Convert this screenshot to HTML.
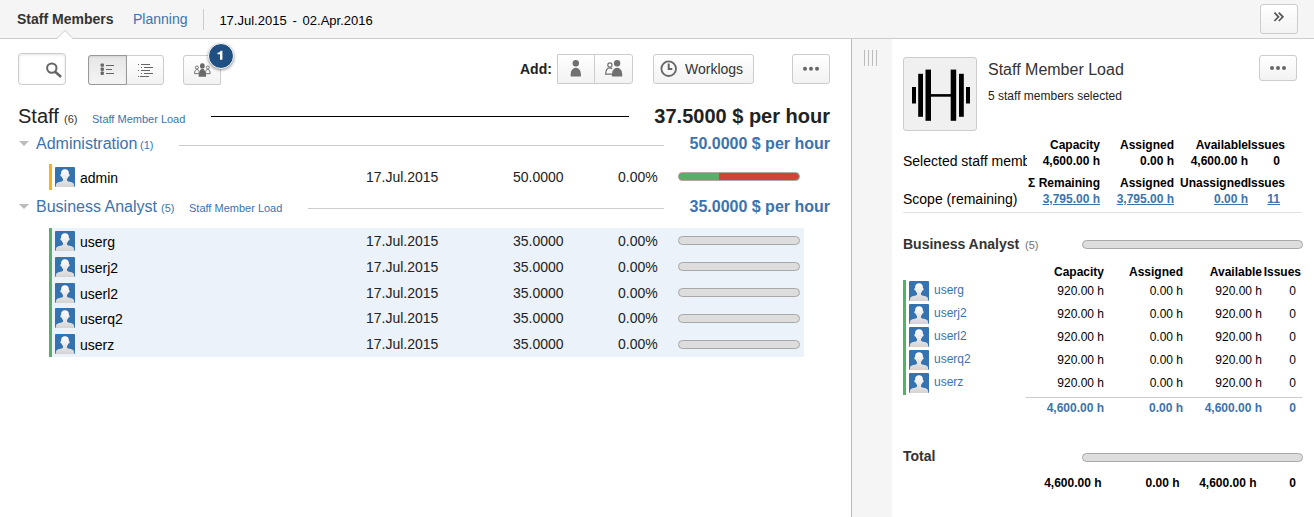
<!DOCTYPE html>
<html><head><meta charset="utf-8">
<style>
*{box-sizing:border-box;margin:0;padding:0}
html,body{width:1314px;height:517px;overflow:hidden;background:#fff}
body{font-family:"Liberation Sans",sans-serif;color:#333;position:relative;font-size:14px}
.a{position:absolute;white-space:nowrap;line-height:1}
.blue{color:#3b73af}
.b{font-weight:bold}
.r{text-align:right}
#hdr{position:absolute;left:0;top:0;width:1314px;height:39px;background:#f5f5f5;border-bottom:1px solid #ccc}
.btn{position:absolute;border:1px solid #ccc;border-radius:3px;background:linear-gradient(#fff,#f2f2f2)}
.bar{position:absolute;height:9px;border-radius:5px;background:#ddd;border:1px solid #a8a8a8}
.av{position:absolute;width:22px;height:22px}
.av2{position:absolute;width:20px;height:20px}
.t12{font-size:12px}
.t14{font-size:14px}
.t11{font-size:11px}
</style></head><body>
<svg width="0" height="0" style="position:absolute"><defs>
<linearGradient id="ag" x1="0" y1="0" x2="0" y2="1"><stop offset="0" stop-color="#fff"/><stop offset="1" stop-color="#d4d4d4"/></linearGradient>
<symbol id="av" viewBox="0 0 20 20"><rect width="20" height="20" rx="1" fill="#3572b0"/>
<path d="M10 2.2c2.3 0 3.9 1.6 3.9 4 0 .3 0 .6-.1.9.7.1 1 .6.8 1.300-.1.600-.6 1-1.200 1-.3 1.100-.8 1.900-1.400 2.500v1.300c0 .6.5 1 1.300 1.200l3.300.9c1.400.4 2.300 1.200 2.400 2.500l.2 2.200H.8l.2-2.200c.1-1.300 1-2.100 2.400-2.500l3.300-.9c.8-.2 1.300-.6 1.300-1.200v-1.300c-.6-.6-1.100-1.400-1.400-2.500-.6 0-1.100-.4-1.200-1-.2-.7.1-1.200.8-1.300-.1-.3-.1-.6-.1-.9 0-2.400 1.600-4 3.900-4z" fill="url(#ag)"/></symbol>
</defs></svg>
<!-- HEADER -->
<div id="hdr"></div>
<div class="a b t14" style="left:17px;top:12px;color:#333">Staff Members</div>
<div class="a t14 blue" style="left:133px;top:12px">Planning</div>
<div class="a" style="left:203px;top:9px;width:1px;height:21px;background:#ccc"></div>
<div class="a" style="left:219.400px;top:14px;font-size:13px;color:#000">17.Jul.2015</div><div class="a" style="left:292.600px;top:14px;font-size:13px;color:#000">-</div><div class="a" style="left:302.600px;top:14px;font-size:13px;color:#000">02.Apr.2016</div>
<svg class="a" style="left:55px;top:30px" width="20" height="10" viewBox="0 0 20 10"><path d="M0 9 L2 9 L10 1 L18 9 L20 9 L20 10 L0 10Z" fill="#fff"/><path d="M0 8.5 L2 8.5 L10 0.5 L18 8.5 L20 8.5" fill="none" stroke="#ccc" stroke-width="1"/></svg>
<div class="btn" style="left:1260px;top:4px;width:38px;height:30px"></div>
<svg class="a" style="left:1270px;top:8px" width="18" height="18"><g fill="none" stroke="#555" stroke-width="1.700"><path d="M4.400 4.600l4.100 4.200-4.100 4.200"/><path d="M8.800 4.600l4.100 4.200-4.100 4.200"/></g></svg>

<!-- LEFT TOOLBAR -->
<div class="a" style="left:18px;top:53px;width:48px;height:32px;border:1px solid #ccc;border-radius:3.500px;background:#fff;box-shadow:inset 0 1px 3px #e4e4e4"></div>
<div class="btn" style="left:88px;top:55px;width:76px;height:30px"></div>
<div class="a" style="left:88px;top:55px;width:38.500px;height:30px;border:1px solid #999;border-radius:3px 0 0 3px;background:linear-gradient(#e6e6e6,#f4f4f4);box-shadow:inset 0 1px 2px rgba(0,0,0,.08)"></div>
<div class="btn" style="left:183px;top:55px;width:38px;height:30px;border-radius:3px 0 0 3px"></div>
<div class="a" style="left:207.500px;top:42.500px;width:26px;height:26px;border-radius:50%;background:#205081;border:1.500px solid #fff;box-shadow:0 1px 3px rgba(0,0,0,.45)"></div>
<svg class="a" style="left:215px;top:48px" width="12" height="14"><path d="M5 11.800V6.300H2.500V4.700C4.200 4.700 5.300 4 5.600 2.800H7.400V11.800Z" fill="#fff"/></svg>

<div class="a b t14" style="left:520px;top:62px;color:#222">Add:</div>
<div class="btn" style="left:557px;top:54px;width:76px;height:30px;border-radius:0 3px 3px 0"></div>
<div class="a" style="left:594px;top:55px;width:1px;height:28px;background:#ccc"></div>
<div class="btn" style="left:653px;top:54px;width:101px;height:30px"></div>
<div class="a t14" style="left:685px;top:62px;color:#333">Worklogs</div>
<div class="btn" style="left:792px;top:54px;width:38px;height:30px"></div>

<!-- STAFF heading -->
<div class="a" style="left:18px;top:106px;font-size:20px;color:#222">Staff</div>
<div class="a t11" style="left:64px;top:113.500px;color:#333">(6)</div>
<div class="a t11 blue" style="left:92px;top:114px">Staff Member Load</div>
<div class="a" style="left:211px;top:116px;width:418px;height:1px;background:#000"></div>
<div class="a b r" style="right:484px;top:106px;font-size:20px;color:#222">37.5000 $ per hour</div>

<!-- Administration -->
<div class="a blue" style="left:36px;top:136px;font-size:16px">Administration</div>
<div class="a t11 blue" style="left:140px;top:140px">(1)</div>
<div class="a" style="left:179px;top:145px;width:485px;height:1px;background:#ccc"></div>
<div class="a b r blue" style="right:484px;top:136px;font-size:16px">50.0000 $ per hour</div>

<div class="a" style="left:49px;top:164px;width:3px;height:26px;background:#f8b318"></div>
<div class="a t14" style="left:80px;top:171px;color:#000">admin</div>
<div class="a t14" style="left:366px;top:170px;color:#222">17.Jul.2015</div>
<div class="a t14" style="left:513px;top:170px;color:#222">50.0000</div>
<div class="a t14" style="left:618px;top:170px;color:#222">0.00%</div>
<div class="a" style="left:678px;top:172px;width:122px;height:9px;border-radius:5px;overflow:hidden;border:1px solid #aaa;background:#d04437"><div style="width:40px;height:9px;background:#59af6a"></div></div>

<!-- Business Analyst -->
<div class="a blue" style="left:36px;top:199px;font-size:16px">Business Analyst</div>
<div class="a t11 blue" style="left:161px;top:202.500px">(5)</div>
<div class="a t11 blue" style="left:189px;top:203px">Staff Member Load</div>
<div class="a" style="left:308px;top:208px;width:356px;height:1px;background:#ccc"></div>
<div class="a b r blue" style="right:484px;top:199px;font-size:16px">35.0000 $ per hour</div>

<div class="a" style="left:49px;top:228px;width:755px;height:129px;background:#ebf2f9"></div>
<div class="a" style="left:49px;top:228px;width:3px;height:129px;background:#59af6a"></div>

<!-- RIGHT -->
<div class="a" style="left:851px;top:39px;width:1px;height:478px;background:#bbb"></div>
<div class="a" style="left:852px;top:39px;width:40px;height:478px;background:#f5f5f5"></div>

<div class="a" style="left:903px;top:57px;width:74px;height:74px;border:1px solid #ccc;border-radius:3px;background:#f0f0f0"></div>
<div class="a" style="left:988px;top:62px;font-size:16px;color:#333">Staff Member Load</div>
<div class="a t12" style="left:988px;top:90px;color:#222">5 staff members selected</div>
<div class="btn" style="left:1259px;top:55px;width:38px;height:26px"></div>

<svg class="a" style="left:55px;top:167px" width="20" height="20"><use href="#av"/></svg>
<svg class="a" style="left:55px;top:231px" width="20" height="20"><use href="#av"/></svg>
<div class="a t14" style="left:80px;top:235px;color:#000">userg</div>
<div class="a t14" style="left:366px;top:234px;color:#222">17.Jul.2015</div>
<div class="a t14" style="left:513px;top:234px;color:#222">35.0000</div>
<div class="a t14" style="left:618px;top:234px;color:#222">0.00%</div>
<div class="bar" style="left:678px;top:236px;width:122px"></div>
<svg class="a" style="left:55px;top:257px" width="20" height="20"><use href="#av"/></svg>
<div class="a t14" style="left:80px;top:261px;color:#000">userj2</div>
<div class="a t14" style="left:366px;top:260px;color:#222">17.Jul.2015</div>
<div class="a t14" style="left:513px;top:260px;color:#222">35.0000</div>
<div class="a t14" style="left:618px;top:260px;color:#222">0.00%</div>
<div class="bar" style="left:678px;top:262px;width:122px"></div>
<svg class="a" style="left:55px;top:283px" width="20" height="20"><use href="#av"/></svg>
<div class="a t14" style="left:80px;top:287px;color:#000">userl2</div>
<div class="a t14" style="left:366px;top:286px;color:#222">17.Jul.2015</div>
<div class="a t14" style="left:513px;top:286px;color:#222">35.0000</div>
<div class="a t14" style="left:618px;top:286px;color:#222">0.00%</div>
<div class="bar" style="left:678px;top:288px;width:122px"></div>
<svg class="a" style="left:55px;top:308px" width="20" height="20"><use href="#av"/></svg>
<div class="a t14" style="left:80px;top:312px;color:#000">userq2</div>
<div class="a t14" style="left:366px;top:311px;color:#222">17.Jul.2015</div>
<div class="a t14" style="left:513px;top:311px;color:#222">35.0000</div>
<div class="a t14" style="left:618px;top:311px;color:#222">0.00%</div>
<div class="bar" style="left:678px;top:314px;width:122px"></div>
<svg class="a" style="left:55px;top:334px" width="20" height="20"><use href="#av"/></svg>
<div class="a t14" style="left:80px;top:338px;color:#000">userz</div>
<div class="a t14" style="left:366px;top:337px;color:#222">17.Jul.2015</div>
<div class="a t14" style="left:513px;top:337px;color:#222">35.0000</div>
<div class="a t14" style="left:618px;top:337px;color:#222">0.00%</div>
<div class="bar" style="left:678px;top:340px;width:122px"></div>
<svg class="a" style="left:19px;top:141px" width="10" height="6"><path d="M0 0h10L5 5z" fill="#bbb"/></svg>
<svg class="a" style="left:19px;top:204px" width="10" height="6"><path d="M0 0h10L5 5z" fill="#bbb"/></svg>
<svg class="a" style="left:44px;top:60px" width="20" height="20"><circle cx="7.8" cy="8.1" r="4.7" fill="none" stroke="#666" stroke-width="2"/><path d="M11.4 12 L16.3 16.2" stroke="#666" stroke-width="2.6" stroke-linecap="round"/></svg>
<svg class="a" style="left:100px;top:62px" width="16" height="14"><g fill="#666"><rect x="0.600" y="1.500" width="3.300" height="3.300" rx="0.800"/><rect x="0.600" y="5.600" width="3.300" height="3.300" rx="0.800"/><rect x="0.600" y="9.600" width="3.300" height="3.300" rx="0.800"/><g shape-rendering="crispEdges"><rect x="6" y="3" width="8" height="1"/><rect x="6" y="7" width="6" height="1"/><rect x="6" y="11" width="8" height="1"/></g></g></svg>
<svg class="a" style="left:138px;top:62px" width="16" height="16" shape-rendering="crispEdges"><g fill="#666"><rect x="0" y="2" width="1" height="1"/><rect x="3" y="2" width="9" height="1"/><rect x="3" y="5" width="1" height="1"/><rect x="6" y="5" width="9" height="1"/><rect x="0" y="8" width="1" height="1"/><rect x="3" y="8" width="9" height="1"/><rect x="3" y="11" width="1" height="1"/><rect x="6" y="11" width="9" height="1"/><rect x="0" y="14" width="1" height="1"/><rect x="2" y="14" width="9" height="1"/></g></svg>
<svg class="a" style="left:193px;top:62px" width="20" height="16"><g fill="none" stroke="#707070" stroke-width="1"><circle cx="3.900" cy="5.500" r="1.500"/><path d="M1.600 11.700c0-2.300.6-4.200 2.300-4.200 1.200 0 1.900.9 2.200 2.200v2z"/><circle cx="14.800" cy="5.500" r="1.500"/><path d="M17.100 11.700c0-2.300-.6-4.200-2.300-4.200-1.200 0-1.900.9-2.200 2.200v2z"/></g><rect x="7" y="1.200" width="4.700" height="5.400" rx="2.200" fill="#6a6a6a"/><path d="M5.600 14.800c.1-1.500.3-3 .8-4.500.5-1.900 1.400-3.500 3-3.500s2.500 1.600 3 3.500c.5 1.500.7 3 .8 4.500z" fill="#6a6a6a"/></svg>
<svg class="a" style="left:0;top:0.400px" width="1314" height="100"><circle cx="575.8" cy="63.200" r="3.200" fill="#707070"/><path d="M570.5999999999999 75.700c0-4.200 1.500-8 5.200-8s5.200 3.800 5.200 8c0 .6-.4.900-1 .900h-8.400c-.6 0-1-.3-1-.900z" fill="#707070"/><g fill="none" stroke="#707070" stroke-width="1.200"><circle cx="609.900" cy="65" r="2.100" fill="#fff"/><path d="M612 74.200h-6.400c.1-3.400 1.300-6.400 4.200-6.400 1 0 1.800.4 2.400 1"/></g><circle cx="617.1" cy="63.200" r="3.200" fill="#707070"/><path d="M611.9 75.700c0-4.200 1.500-8 5.200-8s5.200 3.800 5.200 8c0 .6-.4.900-1 .900h-8.400c-.6 0-1-.3-1-.900z" fill="#707070"/></svg>
<svg class="a" style="left:659px;top:59px" width="20" height="20"><circle cx="9.700" cy="9.700" r="7.300" fill="none" stroke="#666" stroke-width="1.800"/><path d="M9.700 4.600v5.500h3.600" fill="none" stroke="#666" stroke-width="2"/></svg>
<svg class="a" style="left:0;top:0" width="1314" height="100"><circle cx="805" cy="68.7" r="2" fill="#666"/><circle cx="811" cy="68.7" r="2" fill="#666"/><circle cx="817" cy="68.7" r="2" fill="#666"/><circle cx="1272" cy="68" r="2" fill="#666"/><circle cx="1278" cy="68" r="2" fill="#666"/><circle cx="1284" cy="68" r="2" fill="#666"/></svg>
<svg class="a" style="left:863px;top:50px" width="16" height="16" shape-rendering="crispEdges"><g fill="#bbb"><rect x="1" width="1" height="16"/><rect x="5" width="1" height="16"/><rect x="9" width="1" height="16"/><rect x="13" width="1" height="16"/></g></svg>
<svg class="a" style="left:903px;top:57px" width="75" height="75"><g fill="#000"><rect x="9" y="30" width="4" height="16.500"/><rect x="15.200" y="16.800" width="4.800" height="43"/><rect x="22.500" y="12.600" width="5.500" height="51.200"/><rect x="28" y="37.100" width="20" height="2.600"/><rect x="47.700" y="12.600" width="5.500" height="51.200"/><rect x="56" y="16.800" width="4.800" height="43"/><rect x="63" y="30" width="4" height="16.500"/></g></svg>
<div class="a b t12" style="right:214px;top:139px;color:#000;">Capacity</div>
<div class="a b t12" style="right:140px;top:139px;color:#000;">Assigned</div>
<div class="a b t12" style="right:66px;top:139px;color:#000;">Available</div>
<div class="a b t12" style="right:29px;top:139px;color:#000;">Issues</div>
<div class="a b t12" style="right:214px;top:155px;color:#000;">4,600.00 h</div>
<div class="a b t12" style="right:140px;top:155px;color:#000;">0.00 h</div>
<div class="a b t12" style="right:66px;top:155px;color:#000;">4,600.00 h</div>
<div class="a b t12" style="right:34px;top:155px;color:#000;">0</div>
<div class="a b t12" style="right:214px;top:177px;color:#000;">Σ Remaining</div>
<div class="a b t12" style="right:140px;top:177px;color:#000;">Assigned</div>
<div class="a b t12" style="right:66px;top:177px;color:#000;">Unassigned</div>
<div class="a b t12" style="right:29px;top:177px;color:#000;">Issues</div>
<div class="a b t12" style="right:214px;top:193px;color:#3b73af;text-decoration:underline">3,795.00 h</div>
<div class="a b t12" style="right:140px;top:193px;color:#3b73af;text-decoration:underline">3,795.00 h</div>
<div class="a b t12" style="right:66px;top:193px;color:#3b73af;text-decoration:underline">0.00 h</div>
<div class="a b t12" style="right:34px;top:193px;color:#3b73af;text-decoration:underline">11</div>
<div class="a t14" style="left:903px;top:154px;width:124px;overflow:hidden;color:#000">Selected staff members</div>
<div class="a t14" style="left:903px;top:192px;color:#000">Scope (remaining)</div>
<div class="a" style="left:903px;top:212px;width:399px;height:1px;background:#e0e0e0"></div>
<div class="a b t14" style="left:903px;top:237px;color:#333">Business Analyst</div>
<div class="a t11" style="left:1025px;top:240px;color:#707070">(5)</div>
<div class="bar" style="left:1082px;top:240px;width:221px"></div>
<div class="a b t12" style="right:210px;top:266px;color:#000;">Capacity</div>
<div class="a b t12" style="right:131px;top:266px;color:#000;">Assigned</div>
<div class="a b t12" style="right:52px;top:266px;color:#000;">Available</div>
<div class="a b t12" style="right:13px;top:266px;color:#000;">Issues</div>
<div class="a" style="left:903px;top:280px;width:3px;height:115px;background:#59af6a"></div>
<svg class="a" style="left:909px;top:281px" width="20" height="20"><use href="#av"/></svg>
<div class="a t12 blue" style="left:934px;top:284px">userg</div>
<div class="a t12" style="right:210px;top:285px;color:#000;">920.00 h</div>
<div class="a t12" style="right:131px;top:285px;color:#000;">0.00 h</div>
<div class="a t12" style="right:52px;top:285px;color:#000;">920.00 h</div>
<div class="a t12" style="right:18px;top:285px;color:#000;">0</div>
<svg class="a" style="left:909px;top:304px" width="20" height="20"><use href="#av"/></svg>
<div class="a t12 blue" style="left:934px;top:307px">userj2</div>
<div class="a t12" style="right:210px;top:308px;color:#000;">920.00 h</div>
<div class="a t12" style="right:131px;top:308px;color:#000;">0.00 h</div>
<div class="a t12" style="right:52px;top:308px;color:#000;">920.00 h</div>
<div class="a t12" style="right:18px;top:308px;color:#000;">0</div>
<svg class="a" style="left:909px;top:327px" width="20" height="20"><use href="#av"/></svg>
<div class="a t12 blue" style="left:934px;top:330px">userl2</div>
<div class="a t12" style="right:210px;top:331px;color:#000;">920.00 h</div>
<div class="a t12" style="right:131px;top:331px;color:#000;">0.00 h</div>
<div class="a t12" style="right:52px;top:331px;color:#000;">920.00 h</div>
<div class="a t12" style="right:18px;top:331px;color:#000;">0</div>
<svg class="a" style="left:909px;top:350px" width="20" height="20"><use href="#av"/></svg>
<div class="a t12 blue" style="left:934px;top:353px">userq2</div>
<div class="a t12" style="right:210px;top:354px;color:#000;">920.00 h</div>
<div class="a t12" style="right:131px;top:354px;color:#000;">0.00 h</div>
<div class="a t12" style="right:52px;top:354px;color:#000;">920.00 h</div>
<div class="a t12" style="right:18px;top:354px;color:#000;">0</div>
<svg class="a" style="left:909px;top:373px" width="20" height="20"><use href="#av"/></svg>
<div class="a t12 blue" style="left:934px;top:376px">userz</div>
<div class="a t12" style="right:210px;top:377px;color:#000;">920.00 h</div>
<div class="a t12" style="right:131px;top:377px;color:#000;">0.00 h</div>
<div class="a t12" style="right:52px;top:377px;color:#000;">920.00 h</div>
<div class="a t12" style="right:18px;top:377px;color:#000;">0</div>
<div class="a" style="left:1026px;top:397px;width:276px;height:1px;background:#ccc"></div>
<div class="a b t12" style="right:210px;top:402px;color:#3b73af;">4,600.00 h</div>
<div class="a b t12" style="right:131px;top:402px;color:#3b73af;">0.00 h</div>
<div class="a b t12" style="right:52px;top:402px;color:#3b73af;">4,600.00 h</div>
<div class="a b t12" style="right:18px;top:402px;color:#3b73af;">0</div>
<div class="a b t14" style="left:903px;top:449px;color:#333">Total</div>
<div class="bar" style="left:1082px;top:453px;width:221px"></div>
<div class="a b t12" style="right:212.500px;top:477px;color:#000;">4,600.00 h</div>
<div class="a b t12" style="right:134.500px;top:477px;color:#000;">0.00 h</div>
<div class="a b t12" style="right:57.500px;top:477px;color:#000;">4,600.00 h</div>
<div class="a b t12" style="right:18px;top:477px;color:#000;">0</div>
</body></html>
